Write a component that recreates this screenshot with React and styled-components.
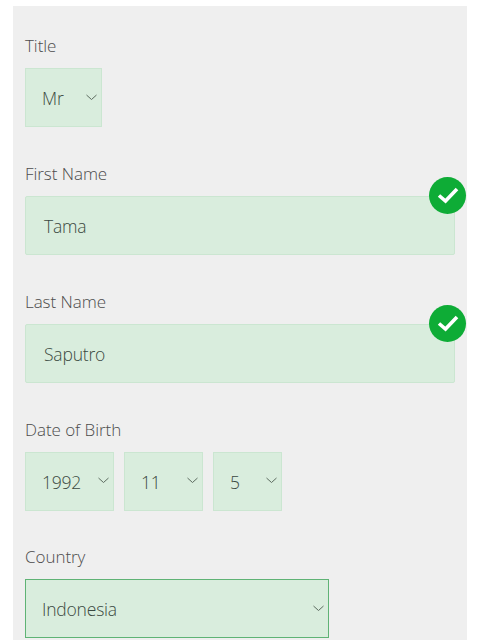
import React from "react";
import styled, { createGlobalStyle } from "styled-components";

const Global = createGlobalStyle`
  html, body { margin: 0; padding: 0; background: #fff; height: 640px; overflow: hidden; }
  body { font-family: "Open Sans", "Liberation Sans", sans-serif; }
`;

const Panel = styled.form`
  box-sizing: border-box;
  width: 454px;
  height: 634px;
  margin: 6px 0 0 13px;
  padding: 29px 12px 0;
  background: #efefef;
  display: flex;
  flex-direction: column;
  gap: 35.85px;
`;

const Group = styled.div`
  display: flex;
  flex-direction: column;
  gap: 11px;
  position: relative;
`;

const Label = styled.div`
  height: 22px;
  line-height: 22px;
  font-size: 17px;
  font-weight: 300;
  color: #4c4c4c;
  letter-spacing: -0.05px;
`;

const Row = styled.div`
  display: flex;
  gap: 10px;
`;

const Field = styled.div`
  box-sizing: border-box;
  width: ${(p) => p.$w}px;
  height: 59px;
  display: flex;
  align-items: center;
  justify-content: space-between;
  padding: 1px 4px 0 ${(p) => p.$pad || 16}px;
  background: #d9eddd;
  border: ${(p) => (p.$focus ? "1.5px solid #5fb375" : "1px solid #cbe6d1")};
  border-radius: ${(p) => (p.$round ? 2 : 0)}px;
  font-size: 17.5px;
  font-weight: 300;
  color: #3a4840;
  letter-spacing: -0.2px;
`;

const Chevron = styled.svg`
  width: 11px;
  height: 7px;
  margin-top: -2px;
  fill: none;
  stroke: #5c6b60;
  stroke-width: 1;
  flex: none;
`;

const Badge = styled.div`
  position: absolute;
  right: -11px;
  top: 14px;
  width: 37px;
  height: 37px;
  border-radius: 50%;
  background: #0eac36;
  display: flex;
  align-items: center;
  justify-content: center;
`;

const Check = styled.svg`
  width: 24px;
  height: 20px;
  fill: none;
  stroke: #fff;
  stroke-width: 3.6;
`;

const Arrow = () => (
  <Chevron viewBox="0 0 11 7">
    <path d="M0.5 1 L5.5 5.5 L10.5 1" />
  </Chevron>
);

const Select = ({ w, value, focus }) => (
  <Field $w={w} $focus={focus}>
    <span>{value}</span>
    <Arrow />
  </Field>
);

const Valid = () => (
  <Badge>
    <Check viewBox="0 0 24 20">
      <path d="M3 10.5 L9.5 16 L21 4" />
    </Check>
  </Badge>
);

export default function App() {
  return (
    <>
      <Global />
      <Panel>
        <Group>
          <Label>Title</Label>
          <Select w={77} value="Mr" />
        </Group>
        <Group>
          <Label>First Name</Label>
          <Field $w={430} $pad={18} $round>Tama</Field>
          <Valid />
        </Group>
        <Group>
          <Label>Last Name</Label>
          <Field $w={430} $pad={18} $round>Saputro</Field>
          <Valid />
        </Group>
        <Group>
          <Label>Date of Birth</Label>
          <Row>
            <Select w={89} value="1992" />
            <Select w={79} value="11" />
            <Select w={69} value="5" />
          </Row>
        </Group>
        <Group>
          <Label>Country</Label>
          <Select w={304} value="Indonesia" focus />
        </Group>
      </Panel>
    </>
  );
}
